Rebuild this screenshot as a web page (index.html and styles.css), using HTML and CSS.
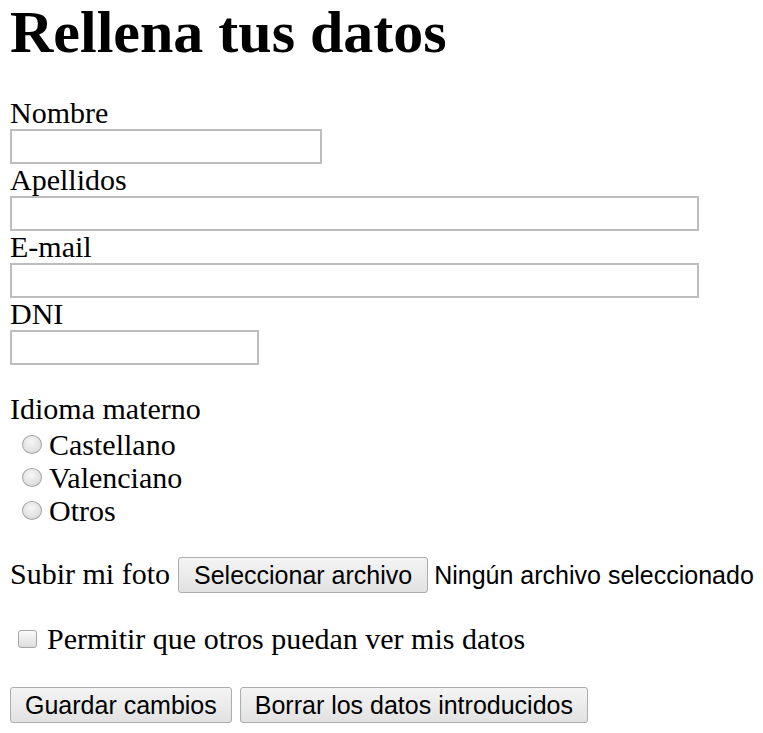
FILE: index.html
```html
<!DOCTYPE html>
<html lang="es">
<head>
<meta charset="utf-8">
<title>Rellena tus datos</title>
<link rel="stylesheet" href="styles.css">
</head>
<body>
<h1 class="title">Rellena tus datos</h1>
<form class="form">
  <div class="field">
    <label class="field-label" for="nombre">Nombre</label>
    <input class="text-input w-short" type="text" id="nombre">
  </div>
  <div class="field">
    <label class="field-label" for="apellidos">Apellidos</label>
    <input class="text-input w-long" type="text" id="apellidos">
  </div>
  <div class="field">
    <label class="field-label" for="email">E-mail</label>
    <input class="text-input w-long" type="email" id="email">
  </div>
  <div class="field">
    <label class="field-label" for="dni">DNI</label>
    <input class="text-input w-dni" type="text" id="dni">
  </div>

  <div class="group">
    <div class="group-label">Idioma materno</div>
    <div class="options">
      <label class="option"><input class="radio" type="radio" name="idioma"><span>Castellano</span></label>
      <label class="option"><input class="radio" type="radio" name="idioma"><span>Valenciano</span></label>
      <label class="option"><input class="radio" type="radio" name="idioma"><span>Otros</span></label>
    </div>
  </div>

  <div class="file-row">
    <span class="nowrap">Subir mi foto</span>
    <button class="btn btn-file" type="button">Seleccionar archivo</button>
    <span class="file-name">Ningún archivo seleccionado</span>
  </div>

  <label class="check-row"><input class="check" type="checkbox"><span class="nowrap">Permitir que otros puedan ver mis datos</span></label>

  <div class="actions">
    <button class="btn" type="submit">Guardar cambios</button>
    <button class="btn" type="reset">Borrar los datos introducidos</button>
  </div>
</form>
</body>
</html>
```
FILE: styles.css
```css
html, body {
  background: #fff;
}
body {
  margin: 0;
  padding: 0 10px;
  font-family: "Liberation Serif", "Times New Roman", serif;
  font-size: 30px;
  color: #000;
}
.nowrap {
  white-space: nowrap;
  flex: none;
}
.title {
  margin: 0;
  padding-top: 1px;
  font-size: 60px;
  line-height: 62px;
  font-weight: bold;
  white-space: nowrap;
}
.form {
  margin: 34px 0 0;
}
.field-label {
  display: block;
  line-height: 32px;
}
.text-input {
  display: block;
  box-sizing: border-box;
  height: 35px;
  margin: 0;
  padding: 0 4px;
  border: 2px solid #bdbdbd;
  background: #fff;
  font-size: 20px;
}
.w-short { width: 312px; }
.w-long { width: 689px; }
.w-dni { width: 249px; }

.group {
  margin-top: 28px;
}
.group-label {
  line-height: 32px;
}
.options {
  padding-top: 3px;
}
.option {
  display: flex;
  align-items: center;
  height: 33px;
  line-height: 33px;
}
.radio {
  appearance: none;
  -webkit-appearance: none;
  box-sizing: border-box;
  width: 20px;
  height: 19px;
  margin: 0 7px 0 12px;
  border: 1px solid #a3a3a3;
  border-radius: 50%;
  background: radial-gradient(circle at 45% 35%, #f7f7f7 0%, #e4e4e4 55%, #d2d2d2 100%);
  flex: none;
}

.file-row {
  display: flex;
  align-items: baseline;
  gap: 8px;
  margin-top: 30px;
  white-space: nowrap;
}
.file-name {
  flex: none;
  white-space: nowrap;
  font-family: "Liberation Sans", Arial, sans-serif;
  font-size: 25px;
  margin-left: -2px;
}
.btn {
  flex: none;
  white-space: nowrap;
  box-sizing: border-box;
  height: 36px;
  margin: 0;
  padding: 0 14px;
  border: 1px solid #acacac;
  border-radius: 3px;
  background: linear-gradient(#f4f4f4, #e2e2e2);
  font-family: "Liberation Sans", Arial, sans-serif;
  font-size: 25px;
  line-height: 34px;
  color: #000;
}
.btn-file {
  padding: 0 15px;
}

.check-row {
  display: flex;
  align-items: center;
  margin-top: 30px;
  line-height: 32px;
}
.check {
  appearance: none;
  -webkit-appearance: none;
  box-sizing: border-box;
  width: 19px;
  height: 18px;
  margin: 0 10px 0 8px;
  border: 1px solid #a7a7a7;
  border-radius: 3px;
  background: linear-gradient(#fbfbfb, #dcdcdc);
  flex: none;
}

.actions {
  display: flex;
  gap: 8px;
  margin-top: 32px;
}
```
